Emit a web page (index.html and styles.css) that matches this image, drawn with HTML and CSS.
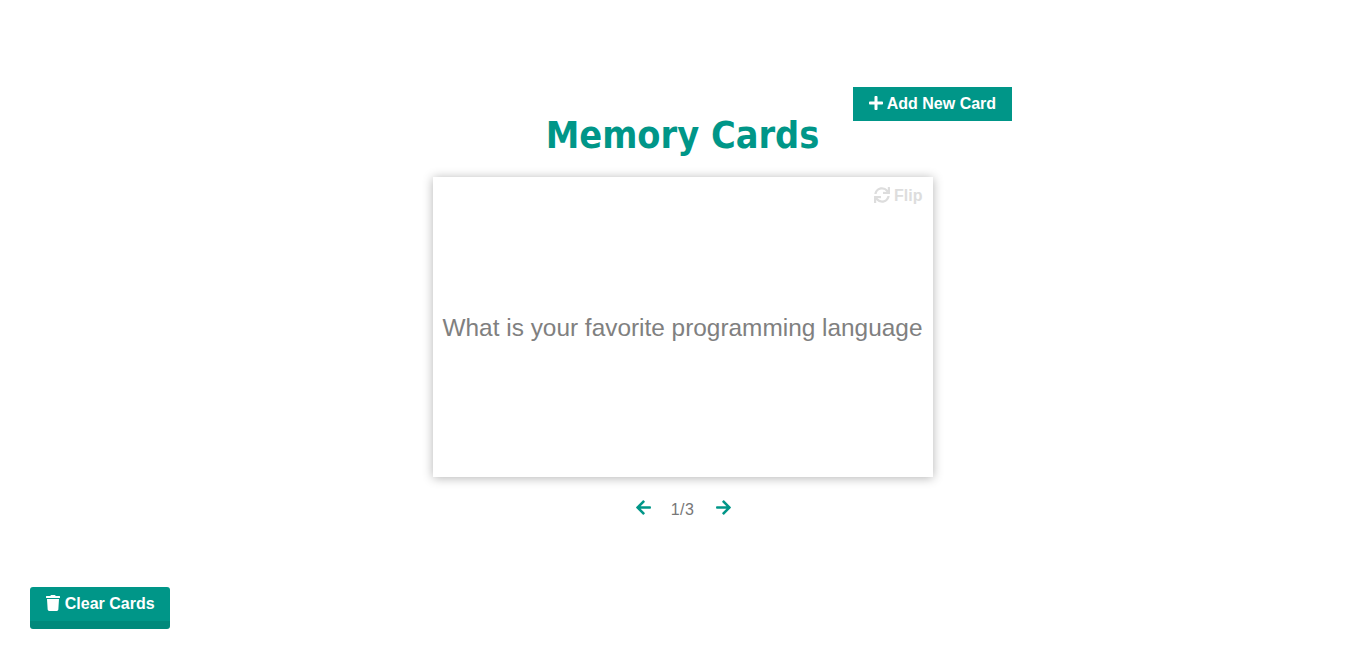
FILE: index.html
```html
<!DOCTYPE html>
<html>
<head>
    <link rel="stylesheet" href="styles.css">
    <title>Memory Cards</title>
</head>
<body>
    <button class="btn clear">
        <svg class="icon" viewBox="0 0 448 512"><path d="M432 32H312l-9.4-18.7A24 24 0 0 0 281.1 0H166.8a23.72 23.72 0 0 0-21.4 13.3L136 32H16A16 16 0 0 0 0 48v32a16 16 0 0 0 16 16h416a16 16 0 0 0 16-16V48a16 16 0 0 0-16-16zM53.2 467a48 48 0 0 0 47.9 45h245.8a48 48 0 0 0 47.9-45L416 128H32z"/></svg>
        Clear Cards
    </button>

    <h1 class="title">
        Memory Cards
        <button class="btn add">
            <svg class="icon" viewBox="0 0 448 512"><path d="M416 208H272V64c0-17.67-14.33-32-32-32h-32c-17.67 0-32 14.33-32 32v144H32c-17.67 0-32 14.33-32 32v32c0 17.67 14.33 32 32 32h144v144c0 17.67 14.33 32 32 32h32c17.67 0 32-14.33 32-32V304h144c17.67 0 32-14.33 32-32v-32c0-17.67-14.33-32-32-32z"/></svg>
            Add New Card
        </button>
    </h1>

    <div class="card">
        <span class="flip">
            <svg class="icon" viewBox="0 0 512 512"><path d="M440.65 12.57l4 82.77A247.16 247.16 0 0 0 255.83 8C134.73 8 33.91 94.92 12.29 209.82A12 12 0 0 0 24.09 224h49.05a12 12 0 0 0 11.67-9.26 175.91 175.91 0 0 1 317-56.94l-101.46-4.86a12 12 0 0 0-12.57 12v47.41a12 12 0 0 0 12 12H500a12 12 0 0 0 12-12V12a12 12 0 0 0-12-12h-47.37a12 12 0 0 0-11.98 12.57zM255.83 432a175.61 175.61 0 0 1-146-77.8l101.8 4.87a12 12 0 0 0 12.57-12v-47.4a12 12 0 0 0-12-12H12a12 12 0 0 0-12 12V500a12 12 0 0 0 12 12h47.35a12 12 0 0 0 12-12.6l-4.15-82.57A247.17 247.17 0 0 0 255.83 504c121.11 0 221.93-86.92 243.55-201.82a12 12 0 0 0-11.8-14.18h-49.05a12 12 0 0 0-11.67 9.26A175.86 175.86 0 0 1 255.83 432z"/></svg>
            Flip
        </span>
        <p class="question">What is your favorite programming language</p>
    </div>

    <div class="nav">
        <button class="nav_btn">
            <svg class="icon" viewBox="0 0 448 512"><path d="M257.5 445.1l-22.2 22.2c-9.4 9.4-24.6 9.4-33.9 0L7 273c-9.4-9.4-9.4-24.6 0-33.9L201.4 44.7c9.4-9.4 24.6-9.4 33.9 0l22.2 22.2c9.5 9.5 9.3 25-.4 34.3L136.6 216H424c13.3 0 24 10.7 24 24v32c0 13.3-10.7 24-24 24H136.6l120.5 114.8c9.8 9.3 10 24.8.4 34.3z"/></svg>
        </button>
        <span class="current">1/3</span>
        <button class="nav_btn">
            <svg class="icon" viewBox="0 0 448 512"><path d="M190.5 66.9l22.2-22.2c9.4-9.4 24.6-9.4 33.9 0L441 239c9.4 9.4 9.4 24.6 0 33.9L246.6 467.3c-9.4 9.4-24.6 9.4-33.9 0l-22.2-22.2c-9.5-9.5-9.3-25 .4-34.3L311.4 296H24c-13.3 0-24-10.7-24-24v-32c0-13.3 10.7-24 24-24h287.4L190.9 101.2c-9.8-9.3-10-24.8-.4-34.3z"/></svg>
        </button>
    </div>
</body>
</html>
```

FILE: styles.css
```css
body
{
    margin:0;
    height:100vh;
    padding-top:106px;
    box-sizing:border-box;
    background-color:white;
    font-family:"Liberation Sans", Arial, sans-serif;
    display:flex;
    flex-direction:column;
    align-items:center;
    overflow:hidden;
}
.icon
{
    width:1em;
    height:1em;
    fill:currentColor;
    vertical-align:-0.125em;
}
.btn
{
    border:none;
    color:white;
    background-color:#009688;
    font-family:"Liberation Sans", Arial, sans-serif;
    font-size:16px;
    font-weight:bold;
}
.btn .icon
{
    margin-right:-1px;
}
.title
{
    position:relative;
    width:500px;
    height:40px;
    margin:0 0 22px 0;
    padding-top:9px;
    text-align:center;
    color:#009688;
    font-family:"Comic Sans MS", "DejaVu Sans Condensed", cursive;
    font-size:37.5px;
    line-height:40px;
}
.add
{
    position:absolute;
    top:-19px;
    left:420px;
    width:159px;
    height:34px;
    line-height:normal;
}
.clear
{
    position:absolute;
    left:30px;
    bottom:20px;
    width:140px;
    height:42px;
    padding:0;
    border-radius:3px;
    border-bottom:8px solid #00897b;
}
.card
{
    position:relative;
    width:500px;
    height:300px;
    display:flex;
    align-items:center;
    justify-content:center;
    background-color:white;
    box-shadow:0 1px 10px rgba(0,0,0,0.3);
}
.flip
{
    position:absolute;
    top:10px;
    right:10px;
    color:#dddddd;
    font-size:16px;
    font-weight:bold;
}
.question
{
    margin:2px 0 0 0;
    color:#808080;
    font-size:24.4px;
    text-align:center;
}
.nav
{
    display:flex;
    align-items:center;
    justify-content:center;
    margin-top:20px;
    height:24px;
}
.nav_btn
{
    border:none;
    padding:0;
    width:16px;
    margin-top:-2px;
    background:none;
    color:#009688;
    font-size:17px;
    line-height:18px;
}
.current
{
    width:64px;
    margin-top:2px;
    text-align:center;
    color:#777777;
    font-size:16px;
    letter-spacing:0.5px;
}
```
